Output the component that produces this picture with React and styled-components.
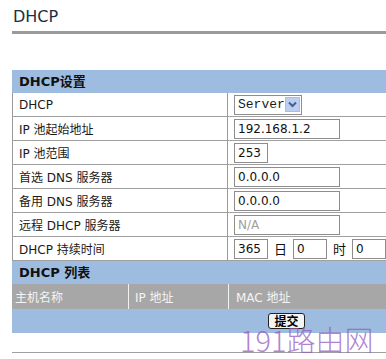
import React from 'react'
import styled, { createGlobalStyle } from 'styled-components'

const Global = createGlobalStyle`
html, body {
    margin: 0;
    padding: 0;
    overflow: hidden;
    background: #fff;
}
body {
    font-family: "DejaVu Sans", "Noto Sans CJK SC", sans-serif;
    font-size: 12px;
    color: #1a1a1a;
}
`
const Page = styled.div`
position: relative;
width: 600px;
padding-left: 12px;
`
const Title = styled.div`
padding: 7px 0 5px 1px;
font-size: 16px;
line-height: 19px;
color: #1d2e40;
border-bottom: 3px solid #9a9a9a;
`
const Table = styled.div`
margin-top: 36px;
`
const Section = styled.div`
height: 23px;
line-height: 23px;
padding-left: 7px;
background-color: #9dbcdf;
font-weight: bold;
font-size: 13px;
color: #111;
`
const Row = styled.div`
display: grid;
grid-template-columns: 215px 1fr;
height: 23px;
border-left: 1px solid #999;
border-bottom: 1px solid #a0a0a0;
`
const Label = styled.div`
display: flex;
align-items: center;
padding-left: 6px;
border-right: 1px solid #999;
`
const Cell = styled.div`
display: flex;
align-items: center;
padding-left: 6px;
gap: 6px;
`
const Input = styled.div`
box-sizing: border-box;
width: ${p => p.w}px;
height: 20px;
line-height: 18px;
padding-left: 3px;
border: 1px solid #8d8d8d;
background: #fff;
color: ${p => (p.disabled ? '#a0a0a0' : '#111')};
font-size: 12px;
`
const Select = styled.div`
box-sizing: border-box;
display: flex;
align-items: center;
justify-content: space-between;
width: 68px;
height: 20px;
padding: 0 1px 0 3px;
border: 1px solid #8d8d8d;
font-family: "Liberation Mono", monospace;
font-size: 13px;
`
const Arrow = styled.span`
display: flex;
align-items: center;
justify-content: center;
width: 15px;
height: 15px;
background: #bccef2;
border: 1px solid #a9bde6;
box-sizing: border-box;
`
const Unit = styled.span`
font-size: 13px;
color: #111;
`
const HeadRow = styled.div`
display: grid;
grid-template-columns: 116px 100px 1fr;
height: 25px;
background-color: #a7a7a7;
color: #f4f4f4;
`
const HeadCell = styled.div`
display: flex;
align-items: center;
padding-left: ${p => p.pad}px;
border-left: ${p => (p.first ? 'none' : '1px solid #f2f2f2')};
`
const SubmitRow = styled.div`
display: flex;
align-items: center;
height: 24px;
padding-left: 256px;
background-color: #9dbcdf;
`
const Button = styled.button`
height: 16px;
width: 37px;
padding: 0;
border: 1px solid #222;
border-radius: 3px;
background: #f4f4f4;
font-family: "Noto Sans CJK SC", sans-serif;
font-weight: bold;
font-size: 12px;
line-height: 14px;
color: #000;
`
const Rule = styled.div`
margin-top: 19px;
border-top: 1px solid #a0a0a0;
`
const Watermark = styled.div`
position: absolute;
left: 240px;
top: 322px;
font-family: "Noto Sans CJK SC", sans-serif;
font-weight: 300;
font-size: 29px;
line-height: 34px;
color: rgba(150, 90, 190, 0.75);
pointer-events: none;
`

const rows = [
    ['IP 池起始地址', '192.168.1.2', 106],
    ['IP 池范围', '253', 34],
    ['首选 DNS 服务器', '0.0.0.0', 106],
    ['备用 DNS 服务器', '0.0.0.0', 106],
]

const App = () => {
    return (
        <>
            <Global />
            <Page>
                <Title>DHCP</Title>
                <Table>
                    <Section>DHCP设置</Section>
                    <Row>
                        <Label>DHCP</Label>
                        <Cell>
                            <Select>
                                Server
                                <Arrow>
                                    <svg width="9" height="7" viewBox="0 0 9 7">
                                        <path d="M1 1.5 L4.5 5 L8 1.5" fill="none" stroke="#4a5f8a" strokeWidth="2" />
                                    </svg>
                                </Arrow>
                            </Select>
                        </Cell>
                    </Row>
                    {rows.map(r => (
                        <Row key={r[0]}>
                            <Label>{r[0]}</Label>
                            <Cell>
                                <Input w={r[2]}>{r[1]}</Input>
                            </Cell>
                        </Row>
                    ))}
                    <Row>
                        <Label>远程 DHCP 服务器</Label>
                        <Cell>
                            <Input w={106} disabled>N/A</Input>
                        </Cell>
                    </Row>
                    <Row>
                        <Label>DHCP 持续时间</Label>
                        <Cell>
                            <Input w={34}>365</Input>
                            <Unit>日</Unit>
                            <Input w={34}>0</Input>
                            <Unit>时</Unit>
                            <Input w={34}>0</Input>
                            <Unit>分</Unit>
                        </Cell>
                    </Row>
                    <Section>DHCP 列表</Section>
                    <HeadRow>
                        <HeadCell first pad={3}>主机名称</HeadCell>
                        <HeadCell pad={6}>IP 地址</HeadCell>
                        <HeadCell pad={7}>MAC 地址</HeadCell>
                    </HeadRow>
                    <SubmitRow>
                        <Button>提交</Button>
                    </SubmitRow>
                </Table>
                <Rule />
                <Watermark>191路由网</Watermark>
            </Page>
        </>
    )
}

export default App
